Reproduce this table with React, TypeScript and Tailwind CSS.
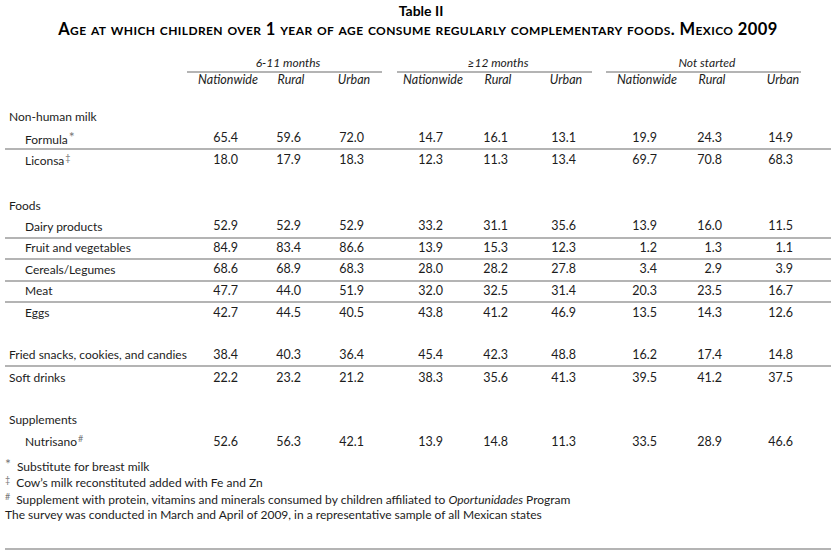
import React from "react";

type RowProps = {
  label: string;
  mark?: string;
  vals?: string[];
  indent?: boolean;
  rule?: boolean;
  h: string;
  mt?: string;
};

const GRID = "grid grid-cols-[182px_51px_63px_63px_79px_65px_68px_81px_65px_71px]";
const HEADS = ["Nationwide", "Rural", "Urban", "Nationwide", "Rural", "Urban", "Nationwide", "Rural", "Urban"];

function Mark({ m, gap }: { m: string; gap?: boolean }) {
  const size = m === "*" ? "text-[14px] top-[-2px]" : "text-[9px] top-[-4px]";
  return <span className={`relative ${size} text-[#777] ${gap ? "mr-[6px]" : "ml-[1px]"}`}>{m}</span>;
}

// h includes the 2px rule (border-box)
function Row({ label, mark, vals, indent, rule, h, mt }: RowProps) {
  return (
    <div className={`${GRID} items-center ${h} ${mt ?? ""} ${rule ? "border-b-2 border-[#b4b4b4]" : ""}`}>
      <div className={`whitespace-nowrap ${indent ? "pl-[20px]" : "pl-[4px]"}`}>
        {label}
        {mark && <Mark m={mark} />}
      </div>
      {(vals ?? []).map((v, i) => (
        <div key={i} className="text-right text-[12.5px]">{v}</div>
      ))}
    </div>
  );
}

function GroupHead({ title, ml }: { title: string; ml: string }) {
  return (
    <div className={`w-[195px] ${ml} border-b-2 border-[#b4b4b4] h-[18px] leading-[16px] text-center pl-[7px] italic whitespace-nowrap`}>
      {title}
    </div>
  );
}

export default function App() {
  return (
    <div className="w-[835px] h-[554px] bg-white text-[#1c1c1c] text-[12px] overflow-hidden font-['Lato','Noto_Sans',sans-serif]">
      <div className="ml-[5px] w-[826px] pt-[3px]">
        <div className="h-[16px] leading-[16px] text-center font-bold text-[14px] text-black pl-[6px]">Table II</div>
        <div className="h-[20px] leading-[20px] text-center font-bold text-[16.5px] text-black [font-variant-caps:small-caps] tracking-[0.4px]">
          Age at which children over 1 year of age consume regularly complementary foods. Mexico 2009
        </div>

        <div className="flex mt-[16px]">
          <div className="w-[182px]" />
          <GroupHead title="6-11 months" ml="ml-0" />
          <GroupHead title="≥12 months" ml="ml-[15px]" />
          <GroupHead title="Not started" ml="ml-[14px]" />
        </div>
        <div className={`${GRID} h-[14px] leading-[14px] italic text-[12.5px]`}>
          <div />
          {HEADS.map((t, i) => (
            <div key={i} className="flex justify-end">
              <div className="w-[20px] flex justify-center whitespace-nowrap">{t}</div>
            </div>
          ))}
        </div>

        <Row label="Non-human milk" h="h-[22px]" mt="mt-[19px]" />
        <Row label="Formula" mark="*" indent rule h="h-[21.5px]" vals={["65.4", "59.6", "72.0", "14.7", "16.1", "13.1", "19.9", "24.3", "14.9"]} />
        <Row label="Liconsa" mark="‡" indent h="h-[22px]" vals={["18.0", "17.9", "18.3", "12.3", "11.3", "13.4", "69.7", "70.8", "68.3"]} />

        <Row label="Foods" h="h-[22px]" mt="mt-[23.5px]" />
        <Row label="Dairy products" indent rule h="h-[21.5px]" vals={["52.9", "52.9", "52.9", "33.2", "31.1", "35.6", "13.9", "16.0", "11.5"]} />
        <Row label="Fruit and vegetables" indent rule h="h-[21.5px]" vals={["84.9", "83.4", "86.6", "13.9", "15.3", "12.3", "1.2", "1.3", "1.1"]} />
        <Row label="Cereals/Legumes" indent rule h="h-[21.5px]" vals={["68.6", "68.9", "68.3", "28.0", "28.2", "27.8", "3.4", "2.9", "3.9"]} />
        <Row label="Meat" indent rule h="h-[21.5px]" vals={["47.7", "44.0", "51.9", "32.0", "32.5", "31.4", "20.3", "23.5", "16.7"]} />
        <Row label="Eggs" indent h="h-[20px]" vals={["42.7", "44.5", "40.5", "43.8", "41.2", "46.9", "13.5", "14.3", "12.6"]} />

        <Row label="Fried snacks, cookies, and candies" rule h="h-[22px]" mt="mt-[22px]" vals={["38.4", "40.3", "36.4", "45.4", "42.3", "48.8", "16.2", "17.4", "14.8"]} />
        <Row label="Soft drinks" h="h-[22px]" vals={["22.2", "23.2", "21.2", "38.3", "35.6", "41.3", "39.5", "41.2", "37.5"]} />

        <Row label="Supplements" h="h-[22px]" mt="mt-[20px]" />
        <Row label="Nutrisano" mark="#" indent h="h-[22px]" vals={["52.6", "56.3", "42.1", "13.9", "14.8", "11.3", "33.5", "28.9", "46.6"]} />

        <div className="mt-[4px]">
          <div className="h-[17px] leading-[17px]"><Mark m="*" gap />Substitute for breast milk</div>
          <div className="h-[17px] leading-[17px]"><Mark m="‡" gap />Cow’s milk reconstituted added with Fe and Zn</div>
          <div className="h-[17px] leading-[17px]">
            <Mark m="#" gap />Supplement with protein, vitamins and minerals consumed by children affiliated to <span className="italic">Oportunidades</span> Program
          </div>
          <div className="h-[14px] leading-[14px]">The survey was conducted in March and April of 2009, in a representative sample of all Mexican states</div>
        </div>
        <div className="mt-[26px] border-b-2 border-[#b4b4b4]" />
      </div>
    </div>
  );
}
